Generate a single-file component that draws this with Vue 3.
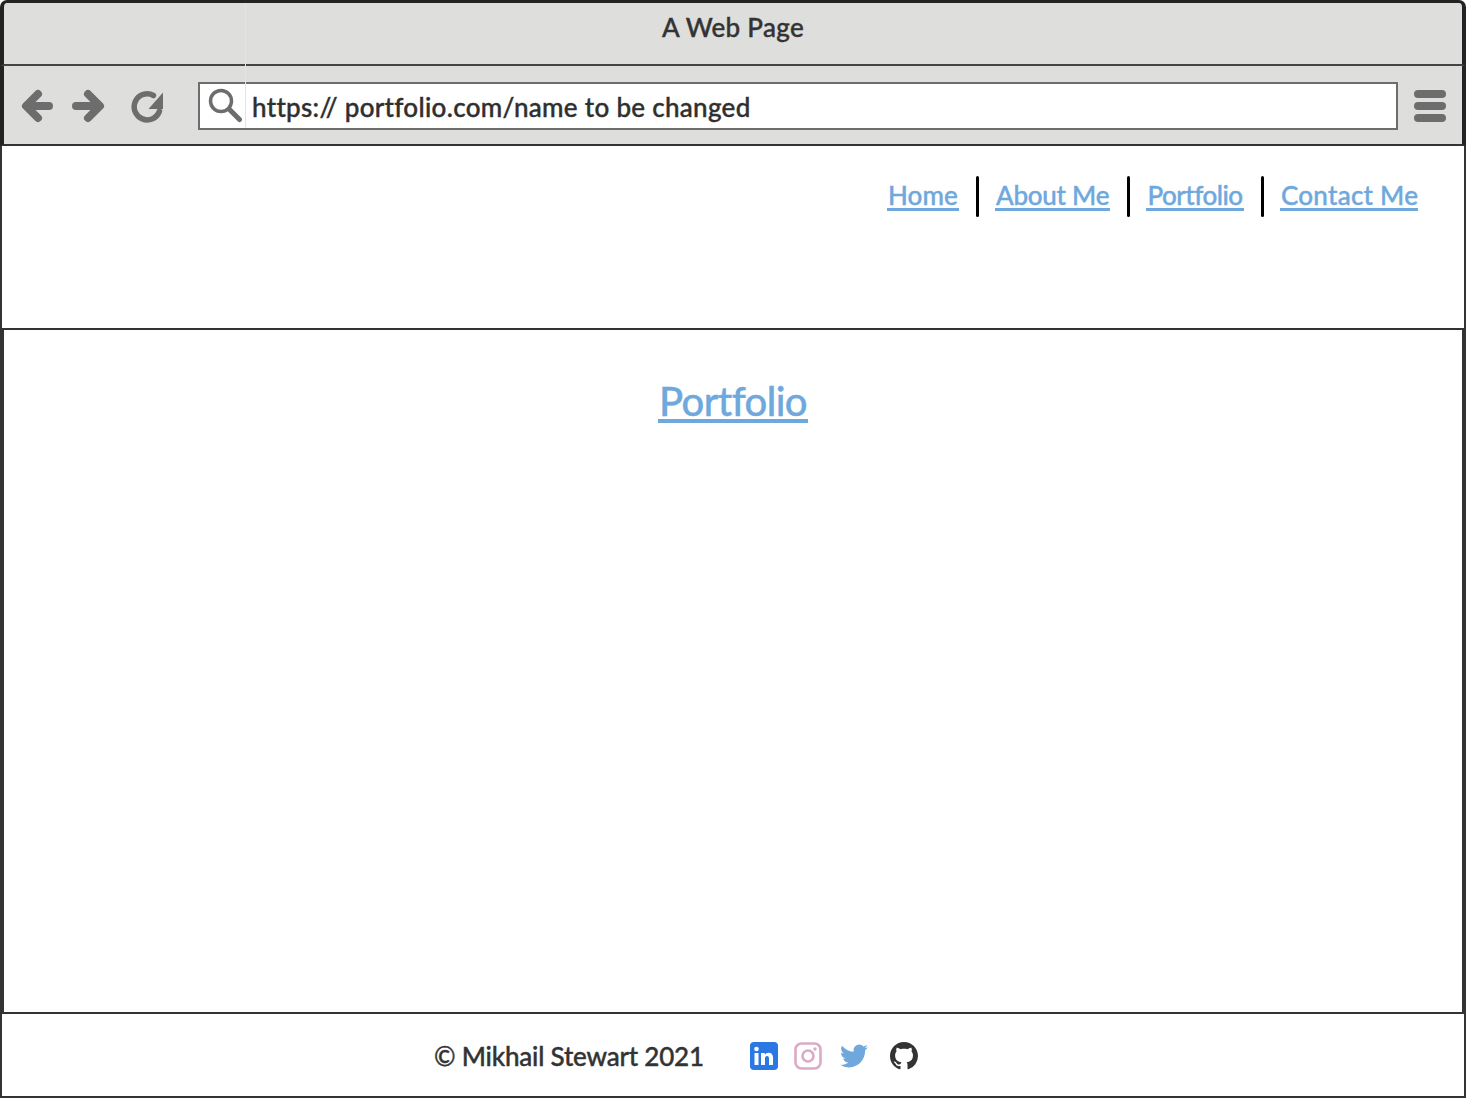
<script setup>
const links = ['Home', 'About Me', 'Portfolio', 'Contact Me']
</script>

<template>
  <div class="page">
    <span class="seam"></span>
    <div class="titlebar">A Web Page</div>
    <div class="toolbar">
      <div class="nav-icons">
        <svg class="ico" width="34" height="34" viewBox="0 0 34 34">
          <path d="M28 17H6M17 5 5 17 17 29" fill="none" stroke="#6d6d6d" stroke-width="8" stroke-linecap="round" stroke-linejoin="round"/>
        </svg>
        <svg class="ico" width="34" height="34" viewBox="0 0 34 34">
          <path d="M5 17h23M17 5 29 17 17 29" fill="none" stroke="#6d6d6d" stroke-width="8" stroke-linecap="round" stroke-linejoin="round"/>
        </svg>
        <svg class="ico reload" width="34" height="34" viewBox="0 0 34 34">
          <path d="M23.500 6.500A13 13 0 1 0 29.500 22" fill="none" stroke="#6d6d6d" stroke-width="5.500" stroke-linecap="round"/>
          <path d="M33 3.500V20H18.500z" fill="#6d6d6d"/>
        </svg>
      </div>
      <div class="url">
        <svg class="search" width="36" height="36" viewBox="0 0 36 36">
          <circle cx="14" cy="13" r="10.500" fill="none" stroke="#6d6d6d" stroke-width="3.500"/>
          <path d="m22.500 21.500 10 10" stroke="#6d6d6d" stroke-width="5" stroke-linecap="round"/>
        </svg>
        <span class="url-text">https:// portfolio.com/name to be changed</span>
      </div>
      <div class="menu"><i></i><i></i><i></i></div>
    </div>
    <header class="header">
      <nav class="links">
        <template v-for="(l, i) in links" :key="l">
          <span v-if="i" class="sep"></span>
          <a class="link" :class="'l' + i">{{ l }}</a>
        </template>
      </nav>
    </header>
    <main class="main">
      <a class="heading">Portfolio</a>
    </main>
    <footer class="footer">
      <span class="copy">© Mikhail Stewart 2021</span>
      <div class="social">
        <svg width="28" height="28" viewBox="0 0 28 28">
          <rect width="28" height="28" rx="4" fill="#2a78e4"/>
          <rect x="4.500" y="11" width="4" height="12" fill="#fff"/>
          <circle cx="6.500" cy="7" r="2.300" fill="#fff"/>
          <path d="M11 11h3.800v1.700c.8-1.200 2.100-2 3.900-2 3.100 0 4.300 2 4.300 5V23h-4v-6.500c0-1.500-.5-2.500-1.900-2.500-1.500 0-2.100 1.100-2.100 2.500V23h-4z" fill="#fff"/>
        </svg>
        <svg width="28" height="28" viewBox="0 0 28 28">
          <rect x="1.500" y="1.500" width="25" height="25" rx="6" fill="none" stroke="#dcaac4" stroke-width="2.600"/>
          <circle cx="14" cy="14" r="5.500" fill="none" stroke="#dcaac4" stroke-width="2.600"/>
          <circle cx="21" cy="7" r="1.700" fill="#dcaac4"/>
        </svg>
        <svg class="tw" width="28" height="28" viewBox="0 0 24 24">
          <path fill="#6fa8dc" d="M23.953 4.570a10 10 0 01-2.825.775 4.958 4.958 0 002.163-2.723c-.951.555-2.005.959-3.127 1.184a4.920 4.920 0 00-8.384 4.482C7.690 8.095 4.067 6.130 1.640 3.162a4.822 4.822 0 00-.666 2.475c0 1.710.870 3.213 2.188 4.096a4.904 4.904 0 01-2.228-.616v.060a4.923 4.923 0 003.946 4.827 4.996 4.996 0 01-2.212.085 4.936 4.936 0 004.604 3.417 9.867 9.867 0 01-6.102 2.105c-.390 0-.779-.023-1.170-.067a13.995 13.995 0 007.557 2.209c9.053 0 13.998-7.496 13.998-13.985 0-.210 0-.420-.015-.630A9.935 9.935 0 0024 4.590z"/>
        </svg>
        <svg class="gh" width="28" height="28" viewBox="0 0 16 16">
          <path fill="#333" d="M8 0C3.580 0 0 3.580 0 8c0 3.540 2.290 6.530 5.470 7.590.4.070.55-.17.55-.38 0-.19-.01-.82-.01-1.490-2.010.37-2.530-.49-2.690-.94-.09-.23-.48-.94-.82-1.130-.28-.15-.68-.52-.01-.53.63-.01 1.080.58 1.230.82.720 1.210 1.870.87 2.330.66.070-.52.28-.87.51-1.070-1.780-.2-3.640-.89-3.640-3.950 0-.87.31-1.590.82-2.150-.08-.2-.36-1.020.08-2.120 0 0 .67-.21 2.200.82.64-.18 1.320-.27 2-.27.68 0 1.360.09 2 .27 1.530-1.040 2.200-.82 2.200-.82.44 1.100.16 1.920.08 2.120.51.56.82 1.270.82 2.150 0 3.070-1.870 3.750-3.650 3.950.29.25.54.73.54 1.480 0 1.070-.01 1.930-.01 2.200 0 .21.15.46.55.38A8.013 8.013 0 0016 8c0-4.420-3.580-8-8-8z"/>
        </svg>
      </div>
    </footer>
  </div>
</template>

<style scoped>
.page {
  position: relative;
  width: 1466px;
  height: 1098px;
  display: flex;
  flex-direction: column;
  background: #fff;
  font-family: "Lato", "Noto Sans", sans-serif;
  font-weight: 500;
  color: #333;
  overflow: hidden;
  -webkit-text-stroke: 0.4px currentColor;
}
.seam {
  position: absolute;
  z-index: 1;
  left: 245px;
  top: 3px;
  width: 1px;
  height: 125px;
  background: #e4e4e2;
}
.titlebar {
  height: 66px;
  box-sizing: border-box;
  background: #dededc;
  border: solid #232323;
  border-width: 3px 4px 2px;
  border-bottom-color: #444;
  border-radius: 7px 7px 0 0;
  display: flex;
  justify-content: center;
  font-size: 26px;
  letter-spacing: 0.3px;
  line-height: 48px;
}
.toolbar {
  height: 80px;
  box-sizing: border-box;
  background: #dededc;
  border: solid #232323;
  border-width: 0 4px 2px;
  border-bottom-color: #333;
  display: flex;
  align-items: center;
  padding: 0 16px 0 17px;
}
.nav-icons {
  display: flex;
  align-items: center;
  gap: 16px;
  width: 177px;
  margin-top: 2px;
}
.ico { flex: none; }
.reload { margin-left: 9px; }
.url {
  width: 1200px;
  height: 48px;
  box-sizing: border-box;
  border: 2px solid #6d6d6d;
  background: #fff;
  display: flex;
  align-items: center;
  margin-top: 2px;
}
.search { margin-left: 7px; flex: none; }
.url-text {
  margin-left: 9px;
  padding-top: 2px;
  font-size: 26px;
  letter-spacing: 0.3px;
  white-space: nowrap;
  color: #2f2f2f;
}
.menu {
  margin-left: 16px;
  margin-top: 2px;
  width: 32px;
  display: flex;
  flex-direction: column;
  gap: 4px;
}
.menu i {
  height: 8px;
  border-radius: 4px;
  background: #6d6d6d;
}
.header {
  height: 184px;
  box-sizing: border-box;
  border: solid #333;
  border-width: 0 2px 2px;
  padding: 30px 46px 0 0;
}
.links {
  display: flex;
  justify-content: flex-end;
  align-items: flex-start;
  gap: 16px;
}
.link {
  padding: 0 1px;
  margin-top: 2px;
  height: 30px;
  border-bottom: 3px solid #6fa8dc;
  line-height: 34px;
  color: #6fa8dc;
  font-size: 26px;
  text-align: center;
  white-space: nowrap;
}
.l0 { width: 70px; letter-spacing: 0.1px; }
.l1 { width: 113px; letter-spacing: -0.25px; }
.l2 { width: 96px; letter-spacing: -0.5px; }
.l3 { width: 136px; letter-spacing: 0.25px; }
.sep {
  width: 3px;
  height: 41px;
  margin-left: 1px;
  border-radius: 2px;
  background: #000;
}
.main {
  flex: 1;
  border: solid #333;
  border-width: 0 4px;
  display: flex;
  justify-content: center;
  align-items: flex-start;
}
.heading {
  margin-top: 48px;
  width: 150px;
  height: 41px;
  border-bottom: 4px solid #6fa8dc;
  text-align: center;
  font-size: 40px;
  letter-spacing: -0.6px;
  line-height: 46px;
  color: #6fa8dc;
  white-space: nowrap;
}
.footer {
  height: 86px;
  box-sizing: border-box;
  border: solid #333;
  border-width: 2px;
  display: flex;
  align-items: center;
  padding: 2px 0 0 432px;
}
.copy {
  width: 316px;
  font-size: 26px;
  letter-spacing: -0.2px;
  white-space: nowrap;
}
.social {
  display: flex;
  align-items: center;
  gap: 16px;
}
.social svg { flex: none; }
.social .tw { margin-left: 2px; }
.social .gh { margin-left: 6px; }
</style>
